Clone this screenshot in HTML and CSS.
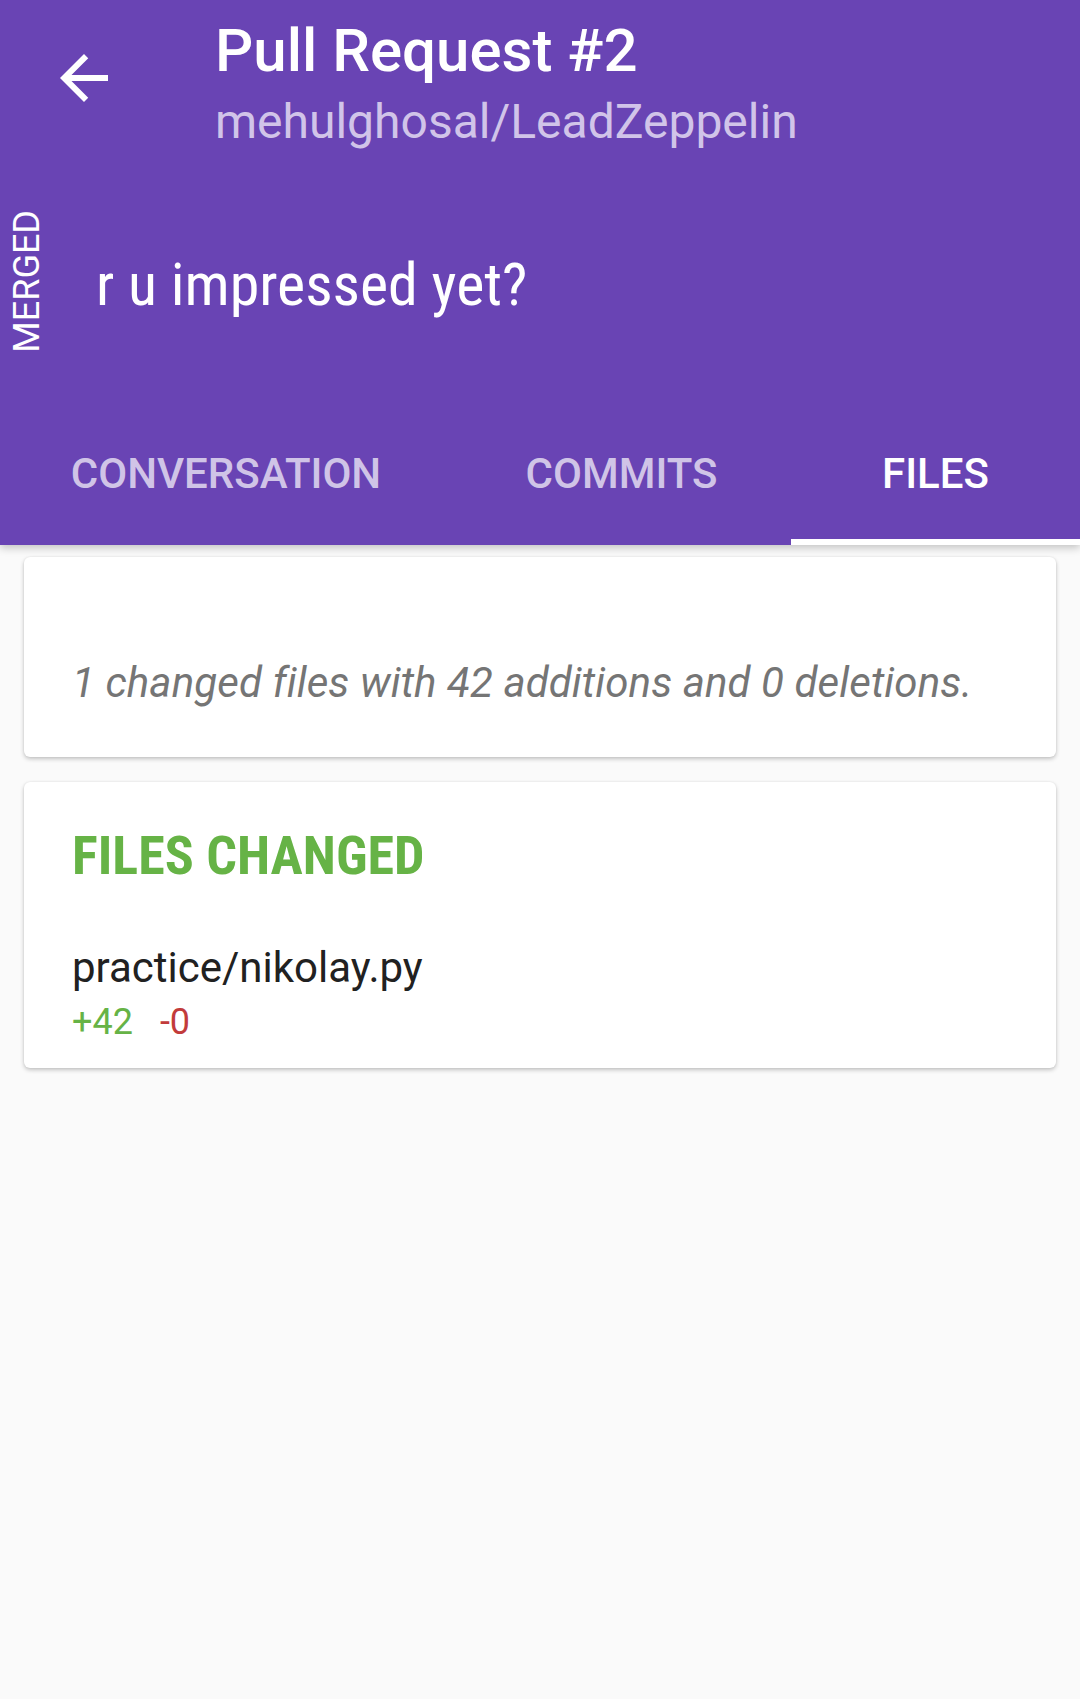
FILE: index.html
```html
<!DOCTYPE html>
<html>
<head>
<meta charset="utf-8">
<link rel="stylesheet" href="styles.css">
</head>
<body>
<header class="appbar">
  <div class="toolbar">
    <svg class="back" viewBox="0 0 24 24" width="72" height="72"><path fill="#fff" d="M20 11H7.83l5.59-5.59L12 4l-8 8 8 8 1.41-1.41L7.83 13H20v-2z"/></svg>
    <div class="titles">
      <div class="title">Pull Request #2</div>
      <div class="subtitle">mehulghosal/LeadZeppelin</div>
    </div>
  </div>
  <div class="pr-head">
    <div class="state">MERGED</div>
    <div class="pr-title">r u impressed yet?</div>
  </div>
  <nav class="tabs">
    <div class="tab tab-conv">CONVERSATION</div>
    <div class="tab tab-commits">COMMITS</div>
    <div class="tab tab-files active">FILES</div>
  </nav>
</header>
<main class="content">
  <section class="card summary">
    <p class="summary-text">1 changed files with 42 additions and 0 deletions.</p>
  </section>
  <section class="card files">
    <h2 class="files-head">FILES CHANGED</h2>
    <div class="file-name">practice/nikolay.py</div>
    <div class="file-stats"><span class="add">+42</span><span class="del">-0</span></div>
  </section>
</main>
</body>
</html>
```
FILE: styles.css
```css
html, body {
  margin: 0;
  padding: 0;
}
body {
  width: 1080px;
  height: 1699px;
  background: #fafafa;
  font-family: Roboto, "Noto Sans", sans-serif;
  overflow: hidden;
}
.appbar {
  background: #6944b4;
  color: #fff;
  position: relative;
  z-index: 2;
  box-shadow: 0 3px 8px rgba(0,0,0,0.22);
}
.toolbar {
  display: flex;
  align-items: flex-start;
  height: 168px;
}
.back {
  display: block;
  margin-top: 42px;
  margin-left: 48px;
  flex: none;
}
.titles {
  margin-left: 95px;
  padding-top: 16px;
}
.title {
  font-size: 60px;
  font-weight: 500;
  line-height: 70px;
}
.subtitle {
  margin-top: 8px;
  font-size: 48px;
  line-height: 56px;
  color: #d1c4e9;
}
.pr-head {
  height: 233px;
  display: flex;
  align-items: center;
}
.state {
  writing-mode: vertical-rl;
  transform: rotate(180deg);
  font-size: 36px;
  line-height: 36px;
  margin-left: 9px;
  margin-bottom: 7px;
}
.pr-title {
  margin-left: 51px;
  font-family: "Roboto Condensed", Roboto, sans-serif;
  font-stretch: condensed;
  font-size: 60px;
  line-height: 60px;
}
.tabs {
  display: grid;
  grid-template-columns: 452px 339px 1fr;
  height: 144px;
}
.tab {
  display: flex;
  align-items: center;
  justify-content: center;
  font-size: 42px;
  font-weight: 500;
  color: rgba(255,255,255,0.7);
  box-sizing: border-box;
}
.tab.active {
  color: #fff;
  border-bottom: 6px solid #fff;
  padding-top: 6px;
}
.content {
  padding: 12px 24px 0;
  display: flex;
  flex-direction: column;
  gap: 25px;
}
.card {
  background: #fff;
  border-radius: 6px;
  box-shadow: 0 2px 4px rgba(0,0,0,0.22), 0 0 2px rgba(0,0,0,0.08);
  padding: 0 48px;
}
.summary {
  height: 200px;
  box-sizing: border-box;
  padding-top: 101px;
}
.summary-text {
  margin: 0;
  font-size: 42px;
  line-height: 50px;
  font-style: italic;
  letter-spacing: 0.1px;
  color: #757575;
}
.files {
  padding-top: 42px;
  padding-bottom: 25px;
}
.files-head {
  margin: 0;
  font-family: "Roboto Condensed", Roboto, sans-serif;
  font-stretch: condensed;
  font-weight: 700;
  font-size: 54px;
  line-height: 64px;
  color: #66b346;
}
.file-name {
  margin-top: 55px;
  font-size: 42px;
  line-height: 50px;
  color: #212121;
}
.file-stats {
  margin-top: 8px;
  font-size: 36px;
  line-height: 42px;
  display: flex;
  gap: 27px;
}
.add { color: #66b346; }
.del { color: #c23b3b; }
```
